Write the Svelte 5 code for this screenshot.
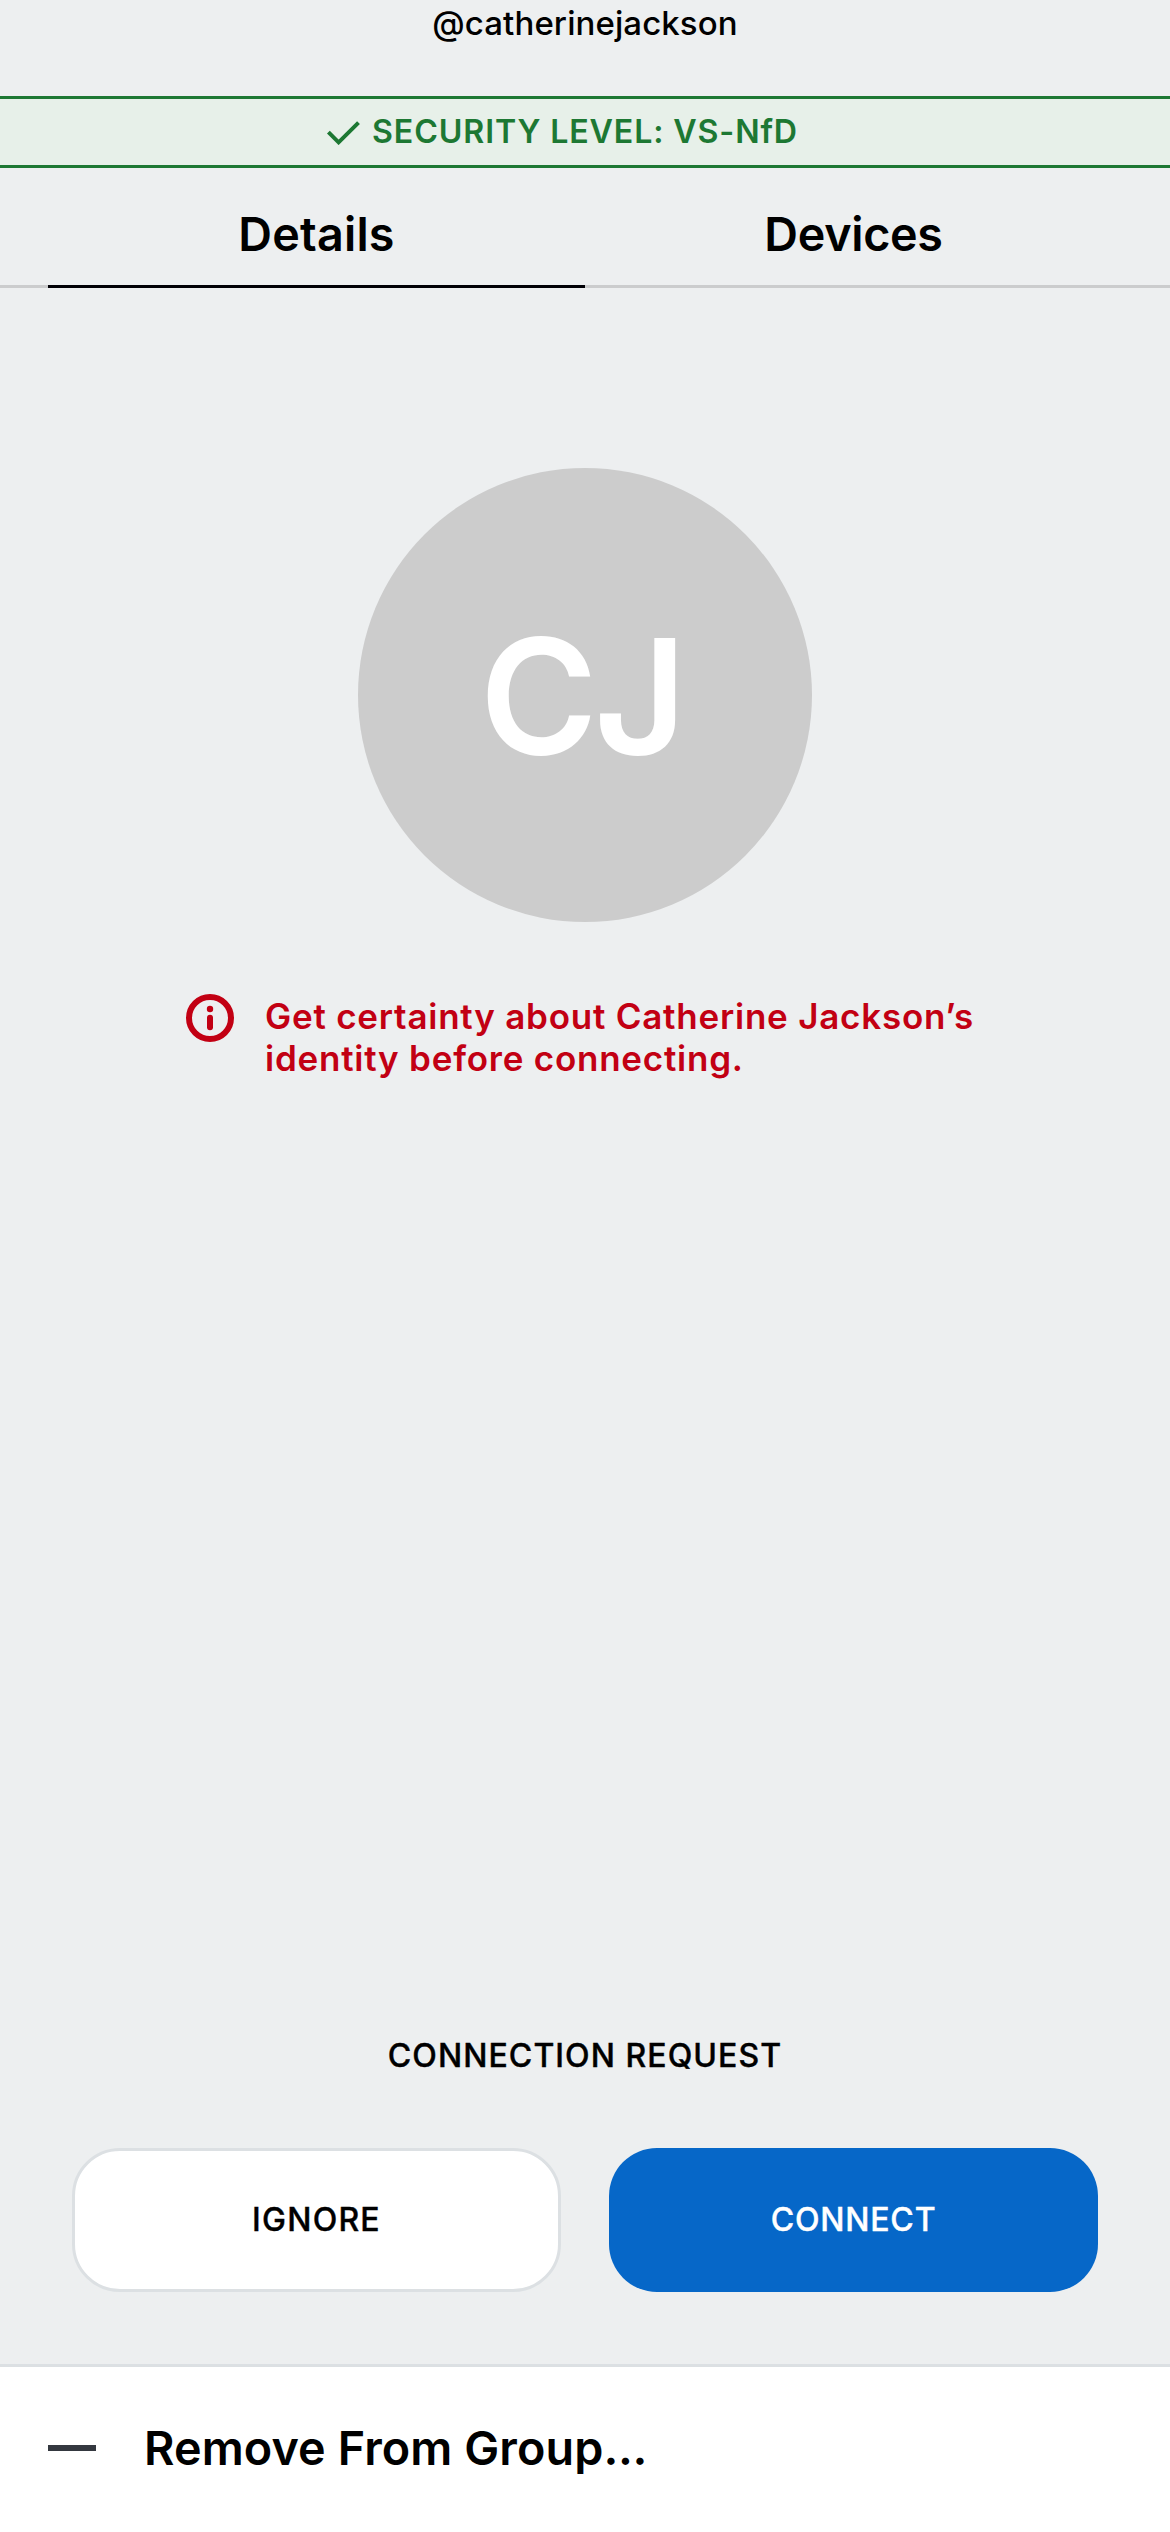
<script>
  const name = 'Catherine Jackson';
</script>

<main>
  <div class="handle"><span>@catherinejackson</span></div>
  <div class="security">
    <svg width="34" height="26" viewBox="0 0 34 26"><path d="M2.4 13.2 12.6 23.3 32.5 3.6" /></svg>
    <span>SECURITY LEVEL: VS-NfD</span>
  </div>
  <nav>
    <button class="active"><span class="details">Details</span></button>
    <button><span class="devices">Devices</span></button>
  </nav>
  <section>
    <div class="avatar"><span>CJ</span></div>
    <div class="warning">
      <svg width="48" height="48" viewBox="0 0 48 48">
        <circle class="ring" cx="24" cy="24" r="21" />
        <circle cx="24" cy="15" r="3.2" />
        <rect x="21" y="20.8" width="6" height="15.4" rx="3" />
      </svg>
      <p><span>Get certainty about {name}’s</span><br /><span>identity before connecting.</span></p>
    </div>
  </section>
  <div class="request"><span>CONNECTION REQUEST</span></div>
  <div class="actions">
    <button class="ignore"><span>IGNORE</span></button>
    <button class="connect"><span>CONNECT</span></button>
  </div>
  <footer><i></i><span class="remove">Remove From Group<span class="dots">...</span></span></footer>
</main>

<style>
  :global(body) { background: #edeff0; }
  main { width: 1170px; height: 2532px; overflow: hidden; display: flex; flex-direction: column; background: #edeff0; color: #000; font-family: Inter, sans-serif; }
  button { border: 0; padding: 0; background: none; color: inherit; font-family: inherit; }
  span { white-space: nowrap; }
  .handle { height: 96px; text-align: center; font-size: 33px; font-weight: 500; line-height: 46px; letter-spacing: .09px; }
  .security { box-sizing: border-box; height: 72px; border: solid #1d7833; border-width: 3px 0; background: #e7f0e9; color: #1d7833; display: flex; align-items: center; justify-content: center; gap: 12px; padding-right: 46px; font-size: 32.2px; font-weight: 600; letter-spacing: .85px; }
  .security span { padding-bottom: 2px; }
  .security svg { fill: none; stroke: #1d7833; stroke-width: 4; }
  nav { box-sizing: border-box; height: 120px; padding: 0 48px; display: flex; box-shadow: inset 0 -3px #cbcccd; }
  nav button { flex: 1; padding-top: 12px; font-size: 46.7px; font-weight: 600; }
  nav .active { box-shadow: inset 0 -3px #000005; }
  .details { letter-spacing: .22px; }
  .devices { letter-spacing: -.3px; }
  section { flex: 1; padding-top: 180px; }
  .avatar { box-sizing: border-box; width: 454px; height: 454px; padding: 2px 7px 0 0; margin: 0 auto; border-radius: 50%; background: #ccc; color: #fff; display: flex; align-items: center; justify-content: center; font-size: 160px; font-weight: 600; letter-spacing: -3.5px; }
  .warning { display: flex; gap: 31px; margin: 72px 0 0 186px; color: #c20013; }
  .warning svg { fill: #c20013; }
  .warning .ring { fill: none; stroke: #c20013; stroke-width: 6; }
  p { margin: 0; padding-top: 2px; font-size: 35px; line-height: 41.5px; font-weight: 600; letter-spacing: .77px; }
  .request { height: 112px; text-align: center; font-size: 32px; line-height: 40px; font-weight: 500; letter-spacing: 1.06px; -webkit-text-stroke-width: .4px; }
  .actions { display: flex; gap: 48px; padding: 0 72px; height: 216px; }
  .actions button { box-sizing: border-box; width: 489px; height: 144px; padding-bottom: 2px; border-radius: 48px; font-size: 32px; font-weight: 500; -webkit-text-stroke-width: .4px; }
  .actions .ignore { background: #fff; border: 3px solid #dce0e3; letter-spacing: 1.24px; }
  .actions .connect { background: #0667c8; color: #fff; letter-spacing: .8px; }
  footer { box-sizing: border-box; height: 168px; border-top: 3px solid #dce0e3; background: #fff; padding: 0 0 3px 48px; display: flex; align-items: center; gap: 48px; font-size: 46.7px; font-weight: 600; }
  .remove { letter-spacing: .1px; }
  .dots { letter-spacing: -.4px; }
  footer i { width: 48px; height: 6px; background: #34383f; }
</style>
